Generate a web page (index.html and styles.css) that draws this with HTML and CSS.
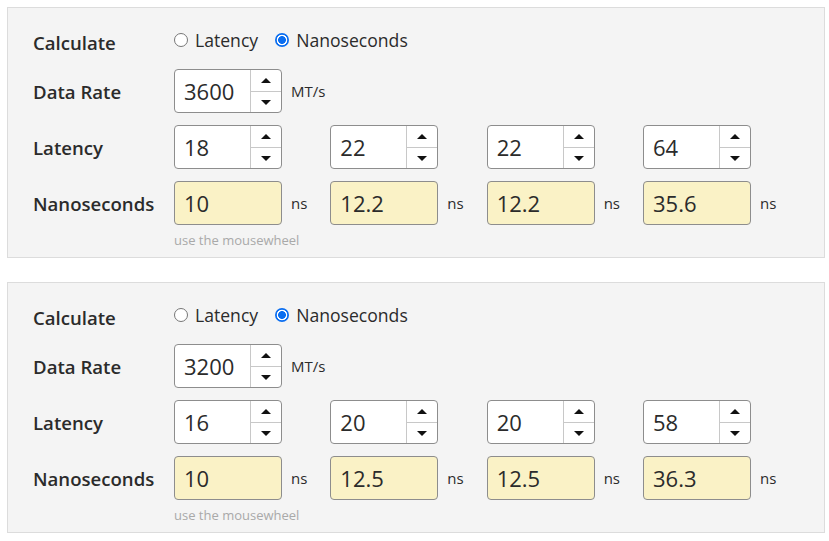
FILE: index.html
```html
<!DOCTYPE html>
<html>
<head>
<meta charset="utf-8">
<link rel="stylesheet" href="styles.css">
</head>
<body>
<div class="page">
  <section class="panel">
    <div class="row calc-row">
      <div class="label">Calculate</div>
      <div class="radios">
        <label class="radio"><input type="radio" name="c1"> Latency</label>
        <label class="radio"><input type="radio" name="c1" checked> Nanoseconds</label>
      </div>
    </div>
    <div class="row rate-row">
      <div class="label">Data Rate</div>
      <div class="cell">
        <div class="spinbox"><input class="val" value="3600"><div class="spin"><span class="up"></span><span class="down"></span></div></div>
        <span class="unit">MT/s</span>
      </div>
    </div>
    <div class="row grid-row">
      <div class="label">Latency</div>
      <div class="cell"><div class="spinbox"><input class="val" value="18"><div class="spin"><span class="up"></span><span class="down"></span></div></div></div>
      <div class="cell"><div class="spinbox"><input class="val" value="22"><div class="spin"><span class="up"></span><span class="down"></span></div></div></div>
      <div class="cell"><div class="spinbox"><input class="val" value="22"><div class="spin"><span class="up"></span><span class="down"></span></div></div></div>
      <div class="cell"><div class="spinbox"><input class="val" value="64"><div class="spin"><span class="up"></span><span class="down"></span></div></div></div>
    </div>
    <div class="row grid-row">
      <div class="label">Nanoseconds</div>
      <div class="cell"><input class="ns" value="10" readonly><span class="unit">ns</span></div>
      <div class="cell"><input class="ns" value="12.2" readonly><span class="unit">ns</span></div>
      <div class="cell"><input class="ns" value="12.2" readonly><span class="unit">ns</span></div>
      <div class="cell"><input class="ns" value="35.6" readonly><span class="unit">ns</span></div>
    </div>
    <div class="hint">use the mousewheel</div>
  </section>

  <section class="panel">
    <div class="row calc-row">
      <div class="label">Calculate</div>
      <div class="radios">
        <label class="radio"><input type="radio" name="c2"> Latency</label>
        <label class="radio"><input type="radio" name="c2" checked> Nanoseconds</label>
      </div>
    </div>
    <div class="row rate-row">
      <div class="label">Data Rate</div>
      <div class="cell">
        <div class="spinbox"><input class="val" value="3200"><div class="spin"><span class="up"></span><span class="down"></span></div></div>
        <span class="unit">MT/s</span>
      </div>
    </div>
    <div class="row grid-row">
      <div class="label">Latency</div>
      <div class="cell"><div class="spinbox"><input class="val" value="16"><div class="spin"><span class="up"></span><span class="down"></span></div></div></div>
      <div class="cell"><div class="spinbox"><input class="val" value="20"><div class="spin"><span class="up"></span><span class="down"></span></div></div></div>
      <div class="cell"><div class="spinbox"><input class="val" value="20"><div class="spin"><span class="up"></span><span class="down"></span></div></div></div>
      <div class="cell"><div class="spinbox"><input class="val" value="58"><div class="spin"><span class="up"></span><span class="down"></span></div></div></div>
    </div>
    <div class="row grid-row">
      <div class="label">Nanoseconds</div>
      <div class="cell"><input class="ns" value="10" readonly><span class="unit">ns</span></div>
      <div class="cell"><input class="ns" value="12.5" readonly><span class="unit">ns</span></div>
      <div class="cell"><input class="ns" value="12.5" readonly><span class="unit">ns</span></div>
      <div class="cell"><input class="ns" value="36.3" readonly><span class="unit">ns</span></div>
    </div>
    <div class="hint">use the mousewheel</div>
  </section>
</div>
</body>
</html>
```

FILE: styles.css
```css
* { box-sizing: border-box; }
html, body { margin: 0; padding: 0; background: #fff; }
body {
  font-family: "Open Sans", "DejaVu Sans", sans-serif;
  color: #2b2b2b;
}
.page {
  padding: 7px 0 0 7px;
  display: flex;
  flex-direction: column;
  gap: 24px;
}
.panel {
  width: 818px;
  background: #f4f4f4;
  border: 1px solid #dcdcdc;
  padding: 22px 0 8px 25px;
}
.row {
  display: grid;
  grid-template-columns: 141px repeat(4, 156.33px);
  align-items: center;
}
.calc-row { height: 24px; margin-bottom: 15px; }
.rate-row { height: 44px; margin-bottom: 12px; }
.grid-row { height: 44px; margin-bottom: 12px; }
.grid-row + .hint { margin-top: -6px; }
.label {
  font-size: 18.6px;
  font-weight: 600;
  line-height: 24px;
  padding-top: 1px;
  color: #2b2b2b;
}
.radios {
  grid-column: 2 / span 4;
  display: flex;
  align-items: center;
  gap: 17px;
  font-size: 17.6px;
  line-height: 24px;
  margin-top: -5px;
}
.radio { display: flex; align-items: center; gap: 7px; }
.radio input {
  -webkit-appearance: none;
  appearance: none;
  margin: 0;
  width: 14px;
  height: 14px;
  border-radius: 50%;
  border: 1px solid #767676;
  background: #fff;
}
.radio input:checked {
  border: none;
  background: radial-gradient(circle, #0b6ef0 0 3.6px, #fff 4.2px 5px, #0b6ef0 5.6px);
}
.cell {
  display: flex;
  align-items: center;
  gap: 9px;
}
.rate-row .cell { grid-column: 2 / span 4; }
.spinbox {
  width: 108px;
  height: 44px;
  border: 1px solid #8d8d8d;
  border-radius: 4px;
  background: #fff;
  display: flex;
}
.val, .ns {
  font-family: "Open Sans", "DejaVu Sans", sans-serif;
  font-size: 22px;
  color: #2b2b2b;
  border: none;
  outline: none;
  background: transparent;
  padding: 0 0 0 9px;
  margin: 0;
}
.val { width: 75px; height: 42px; }
.spin {
  width: 31px;
  border-left: 1px solid #c8c8c8;
  display: flex;
  flex-direction: column;
}
.spin span {
  flex: 1;
  display: flex;
  align-items: center;
  justify-content: center;
}
.spin .up { border-bottom: 1px solid #c8c8c8; }
.spin .up::before {
  content: "";
  border-left: 5px solid transparent;
  border-right: 5px solid transparent;
  border-bottom: 5px solid #111;
  margin-top: 1px;
}
.spin .down::before {
  content: "";
  border-left: 5px solid transparent;
  border-right: 5px solid transparent;
  border-top: 5px solid #111;
  margin-top: 1px;
}
.ns {
  width: 108px;
  height: 44px;
  border: 1px solid #8d8d8d;
  border-radius: 4px;
  background: #faf2c6;
}
.unit { font-size: 15px; color: #2b2b2b; }
.hint {
  margin-left: 141px;
  font-size: 13px;
  line-height: 18px;
  color: #a9a9a9;
}
```
